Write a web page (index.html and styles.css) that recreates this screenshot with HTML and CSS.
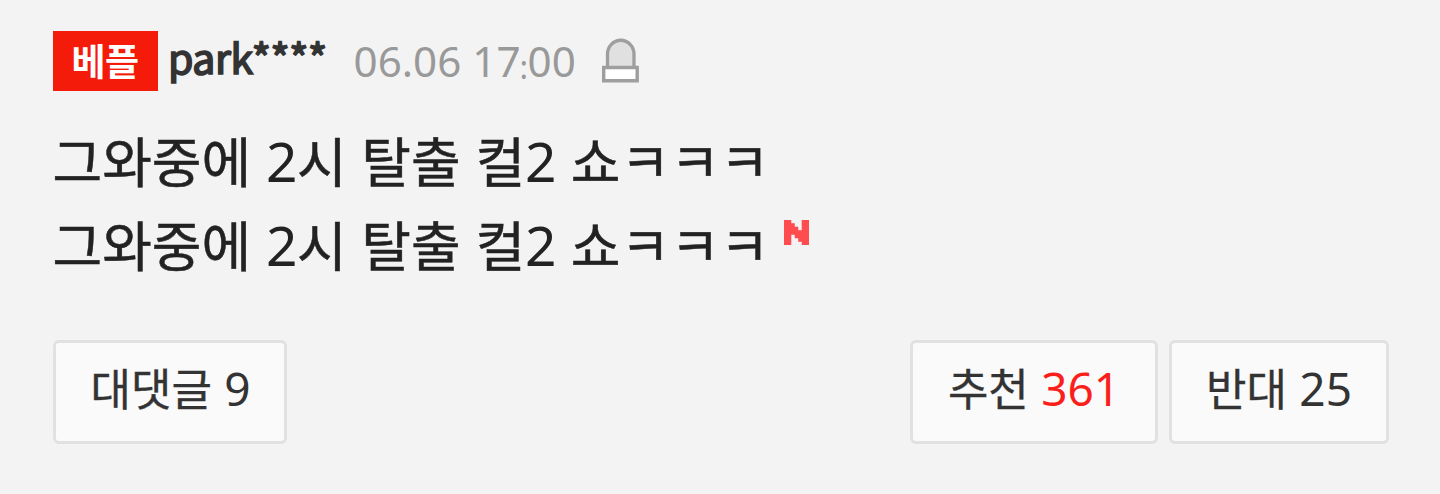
FILE: index.html
```html
<!DOCTYPE html>
<html lang="ko">
<head>
<meta charset="utf-8">
<title>댓글</title>
<link rel="stylesheet" href="styles.css">
</head>
<body>
<article class="comment">
  <header class="meta">
    <span class="badge">베플</span>
    <strong class="author">park****</strong>
    <time class="date">06.06 17<span class="colon">:</span>00</time>
    <svg class="siren" width="38" height="46" viewBox="0 0 38 46" fill="none">
      <path d="M5.500 29V16a13 13.500 0 0 1 26.500 0V29" fill="#e0e0e0" stroke="#9e9e9e" stroke-width="3.300"/>
      <path d="M1.700 29.500h33.500v13.300H1.700z" fill="#fff" stroke="#9e9e9e" stroke-width="3.400"/>
    </svg>
  </header>
  <div class="body">
    <p class="line">그와중에 <span class="num">2</span>시 탈출 컬<span class="num">2</span> 쇼ㅋㅋㅋ</p>
    <p class="line">그와중에 <span class="num">2</span>시 탈출 컬<span class="num">2</span> 쇼ㅋㅋㅋ<svg class="new" width="25" height="25" viewBox="0 0 25 25"><path d="M0 0h7v3.500h3.500V7H14v3.500h4V0h7v25h-7v-3.500h-3.500V18H11v-3.500H7V25H0z" fill="#ff4d4f" stroke="#ff4d4f" stroke-width=".6"/></svg></p>
  </div>
  <footer class="actions">
    <button class="btn reply">대댓글 <span class="count">9</span></button>
    <div class="votes">
      <button class="btn up">추천 <span class="count red">361</span></button>
      <button class="btn down">반대 <span class="count">25</span></button>
    </div>
  </footer>
</article>
</body>
</html>
```

FILE: styles.css
```css
body { margin: 0; background: #f3f3f3; font-family: "Noto Sans CJK KR", sans-serif; }
.comment { box-sizing: border-box; height: 494px; padding: 31px 51px 50px 52.500px; }
.meta { display: flex; height: 60px; align-items: flex-start; }
.badge { box-sizing: border-box; width: 105px; height: 60px; background: #f51b0a; color: #fff; font-size: 37px; font-weight: 700; line-height: 58px; letter-spacing: -0.500px; text-align: center; }
.author { margin-left: 10.500px; width: 175.500px; font-size: 41px; font-weight: 400; line-height: 50px; letter-spacing: -0.400px; color: #333; -webkit-text-stroke: 1.700px #333; white-space: nowrap; }
.date { width: 246px; margin-left: 10px; font-family: "Noto Sans", sans-serif; font-size: 42.200px; line-height: 60px; color: #999; white-space: nowrap; }
.colon { display: inline-block; width: 7px; text-indent: -1px; font-size: 32px; line-height: 1; vertical-align: -2px; }
.siren { margin: 7px 0 0 2.500px; }
.body { margin-top: 27px; height: 222px; }
.line { margin: 0; height: 84px; line-height: 84px; font-size: 54px; word-spacing: -0.400px; color: #222; -webkit-text-stroke: 0.500px #222; white-space: nowrap; }
.num, .count { font-family: "Noto Sans", sans-serif; line-height: 1; -webkit-text-stroke: 0; }
.num { font-size: 55px; letter-spacing: -0.500px; vertical-align: 1px; }
.new { margin-left: 14.500px; vertical-align: 22px; }
.actions { display: flex; justify-content: space-between; }
.votes { display: flex; gap: 11px; }
.btn { box-sizing: border-box; height: 104px; padding: 0 0 10px; border: 3px solid #e1e1e1; border-radius: 6px; background: #fafafa; font-family: inherit; font-size: 44px; color: #333; -webkit-text-stroke: 0.300px #333; white-space: nowrap; }
.reply { width: 234px; padding-left: 2px; }
.up { width: 248px; }
.down { width: 220px; }
.count { font-size: 46px; }
.red { color: #fb1f1c; }
```
